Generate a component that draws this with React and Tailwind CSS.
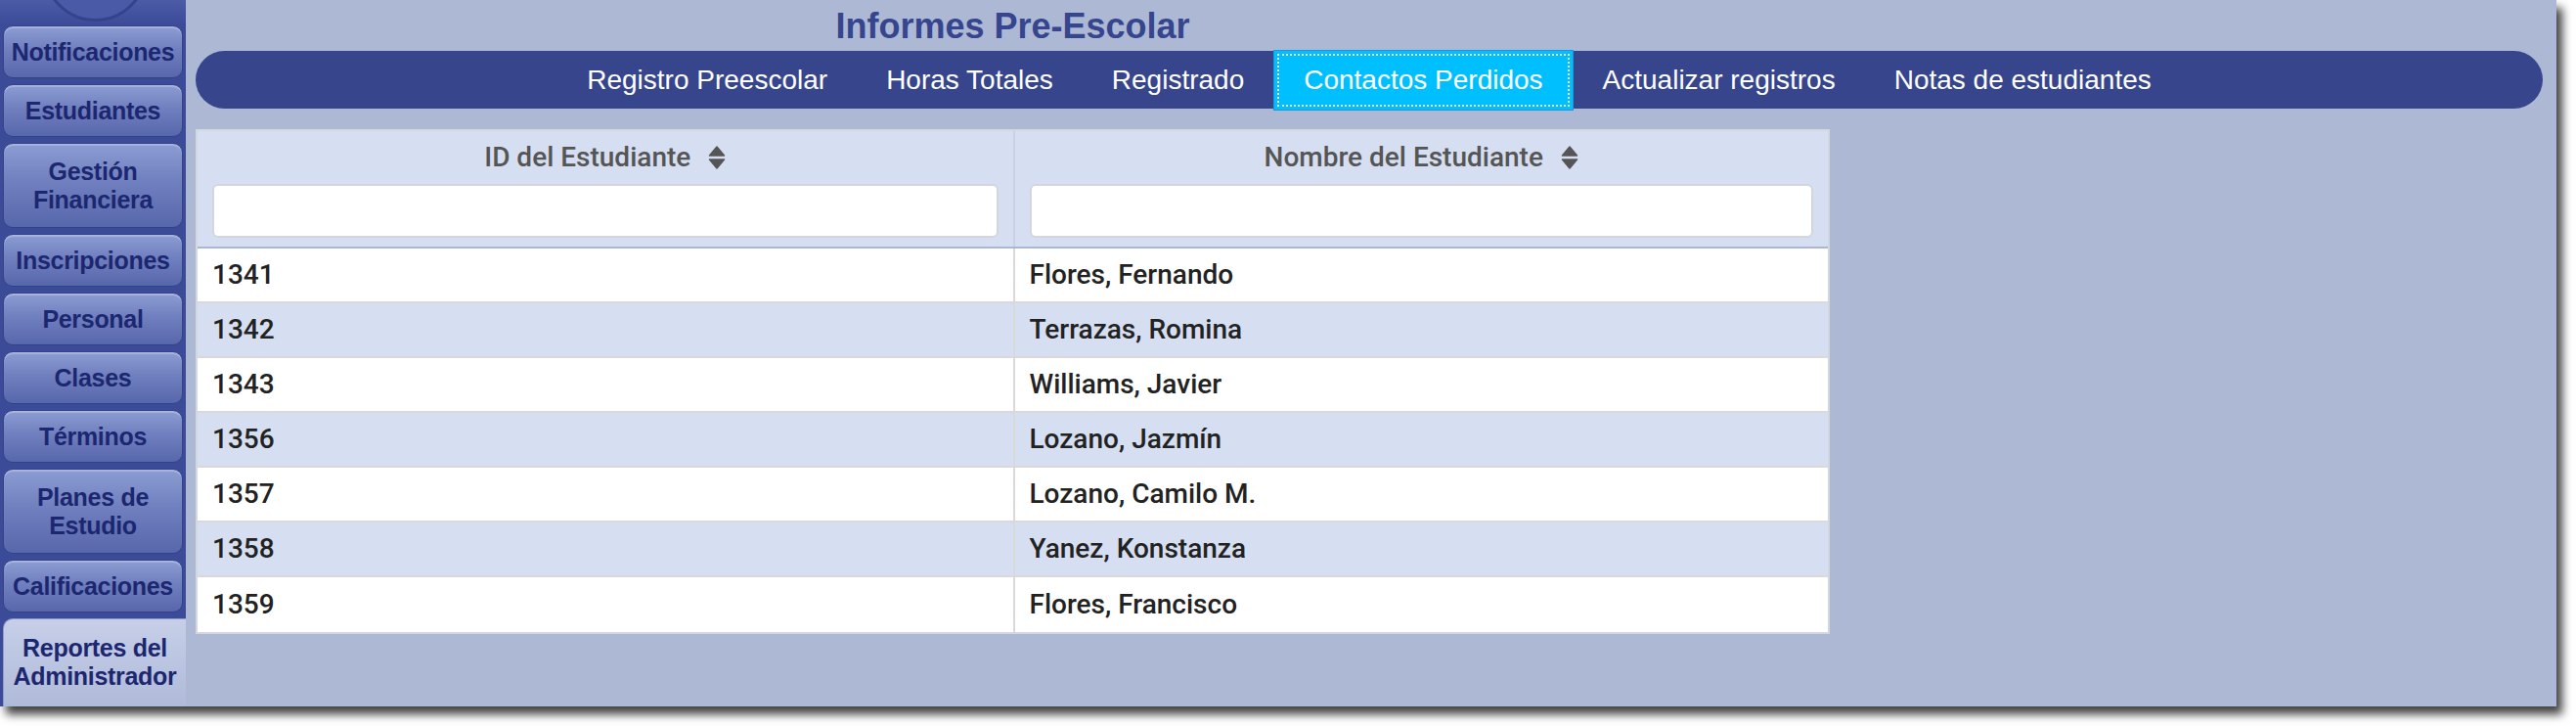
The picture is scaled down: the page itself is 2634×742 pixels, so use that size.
import React from 'react';

const sideItems = [
  { label: 'Notificaciones', tall: false },
  { label: 'Estudiantes', tall: false },
  { label: 'Gestión Financiera', tall: true },
  { label: 'Inscripciones', tall: false },
  { label: 'Personal', tall: false },
  { label: 'Clases', tall: false },
  { label: 'Términos', tall: false },
  { label: 'Planes de Estudio', tall: true },
  { label: 'Calificaciones', tall: false },
];

const tabs = [
  'Registro Preescolar',
  'Horas Totales',
  'Registrado',
  'Contactos Perdidos',
  'Actualizar registros',
  'Notas de estudiantes',
];

const rows = [
  ['1341', 'Flores, Fernando'],
  ['1342', 'Terrazas, Romina'],
  ['1343', 'Williams, Javier'],
  ['1356', 'Lozano, Jazmín'],
  ['1357', 'Lozano, Camilo M.'],
  ['1358', 'Yanez, Konstanza'],
  ['1359', 'Flores, Francisco'],
];

const SortIcon = () => (
  <svg width="18" height="26" viewBox="0 0 18 26" className="shrink-0">
    <path d="M1.5 11 L9 2 L16.5 11 Z" fill="#555" stroke="#555" strokeWidth="1.5" strokeLinejoin="round" />
    <path d="M1.5 15 L16.5 15 L9 24 Z" fill="#555" stroke="#555" strokeWidth="1.5" strokeLinejoin="round" />
  </svg>
);

const Sidebar = () => (
  <div className="w-[190px] h-full bg-[#3c4b98] flex flex-col shrink-0 overflow-hidden">
    {/* logo circle, cropped at top */}
    <div className="h-[26px] shrink-0 overflow-hidden flex items-end justify-center bg-gradient-to-b from-[#4b5ba6] to-[#3c4b98]">
      <div className="w-[107px] h-[107px] shrink-0 rounded-full bg-[#4a5aa6] border-[3px] border-[#34438c] mb-[4px] ml-[5px]" />
    </div>
    <div className="flex flex-col shrink-0 gap-[6px] pl-[3px] font-['Liberation_Sans',Arial,sans-serif] font-bold text-[25px] leading-[29px] text-[#1c2770]">
      {sideItems.map((item) => (
        <div
          key={item.label}
          className={`${item.tall ? 'h-[87px] px-[20px]' : 'h-[54px]'} shrink-0 w-[184px] rounded-[10px] border border-[#34428b] bg-gradient-to-b from-[#8c9cd2] via-[#6d7dbd] to-[#5767ab] shadow-[inset_0_2px_1px_rgba(255,255,255,0.25)] flex items-center justify-center text-center tracking-[-0.3px]`}
        >
          {item.label}
        </div>
      ))}
      <div className="h-[92px] shrink-0 w-[187px] rounded-tl-[10px] border-l border-t border-[#8f9dcc] bg-gradient-to-b from-[#c7cfe8] to-[#afbad9] flex items-center justify-center text-center px-[2px] pb-[4px] tracking-[-0.3px]">
        Reportes del Administrador
      </div>
    </div>
  </div>
);

const NavBar = () => (
  <div className="h-[59px] shrink-0 rounded-full bg-[#36458c] flex items-center justify-center font-['Liberation_Sans',Arial,sans-serif] text-[28px] text-white">
    {tabs.map((t) =>
      t === 'Contactos Perdidos' ? (
        <div
          key={t}
          className="h-[62px] px-[3px] py-[3px] bg-[#00bfff] border border-[#1a9ad8] flex items-stretch"
        >
          <div className="px-[25px] border-2 border-dotted border-white flex items-center">{t}</div>
        </div>
      ) : (
        <div key={t} className="px-[30px] h-full flex items-center">
          {t}
        </div>
      )
    )}
  </div>
);

const Table = () => (
  <div className="w-[1671px] shrink-0 mt-[21px] border-2 border-[#d3d7de] font-['Roboto',sans-serif]">
    <div className="grid grid-cols-2 bg-[#d6dff1] border-b-2 border-[#a9b7d3]">
      {['ID del Estudiante', 'Nombre del Estudiante'].map((h, i) => (
        <div key={h} className={`pt-[14px] pb-[9px] px-[15px] ${i === 1 ? 'border-l-2 border-[#c9d2e4]' : ''}`}>
          <div className="h-[26px] flex items-center justify-center gap-[18px] text-[28px] font-medium text-[#555]">
            <span>{h}</span>
            <SortIcon />
          </div>
          <div className="mt-[14px] h-[55px] bg-white border-2 border-[#d3d6dc] rounded-[6px]" />
        </div>
      ))}
    </div>
    {rows.map((r, idx) => (
      <div
        key={r[0]}
        className={`grid grid-cols-2 h-[56px] text-[28px] font-medium text-[#222] ${idx % 2 === 1 ? 'bg-[#d6dff1]' : 'bg-white'} ${idx < rows.length - 1 ? 'border-b-2 border-[#d9d9d9]' : ''}`}
      >
        <div className="px-[15px] flex items-center">{r[0]}</div>
        <div className="px-[15px] flex items-center border-l-2 border-[#d9d9d9]">{r[1]}</div>
      </div>
    ))}
  </div>
);

export default function App() {
  return (
    <div className="w-[2634px] h-[742px] bg-white overflow-hidden">
      <div className="w-[2614px] h-[722px] flex shadow-[6px_8px_9px_rgba(0,0,0,0.75)]">
        <Sidebar />
        <div className="flex-1 bg-[#adb9d4] pl-[10px] pr-[14px] flex flex-col">
          <div className="w-[1671px] shrink-0 pt-[7px] h-[52px] text-center font-['Liberation_Sans',Arial,sans-serif] font-bold text-[36px] leading-[40px] text-[#35458e]">
            Informes Pre-Escolar
          </div>
          <NavBar />
          <Table />
        </div>
      </div>
    </div>
  );
}
